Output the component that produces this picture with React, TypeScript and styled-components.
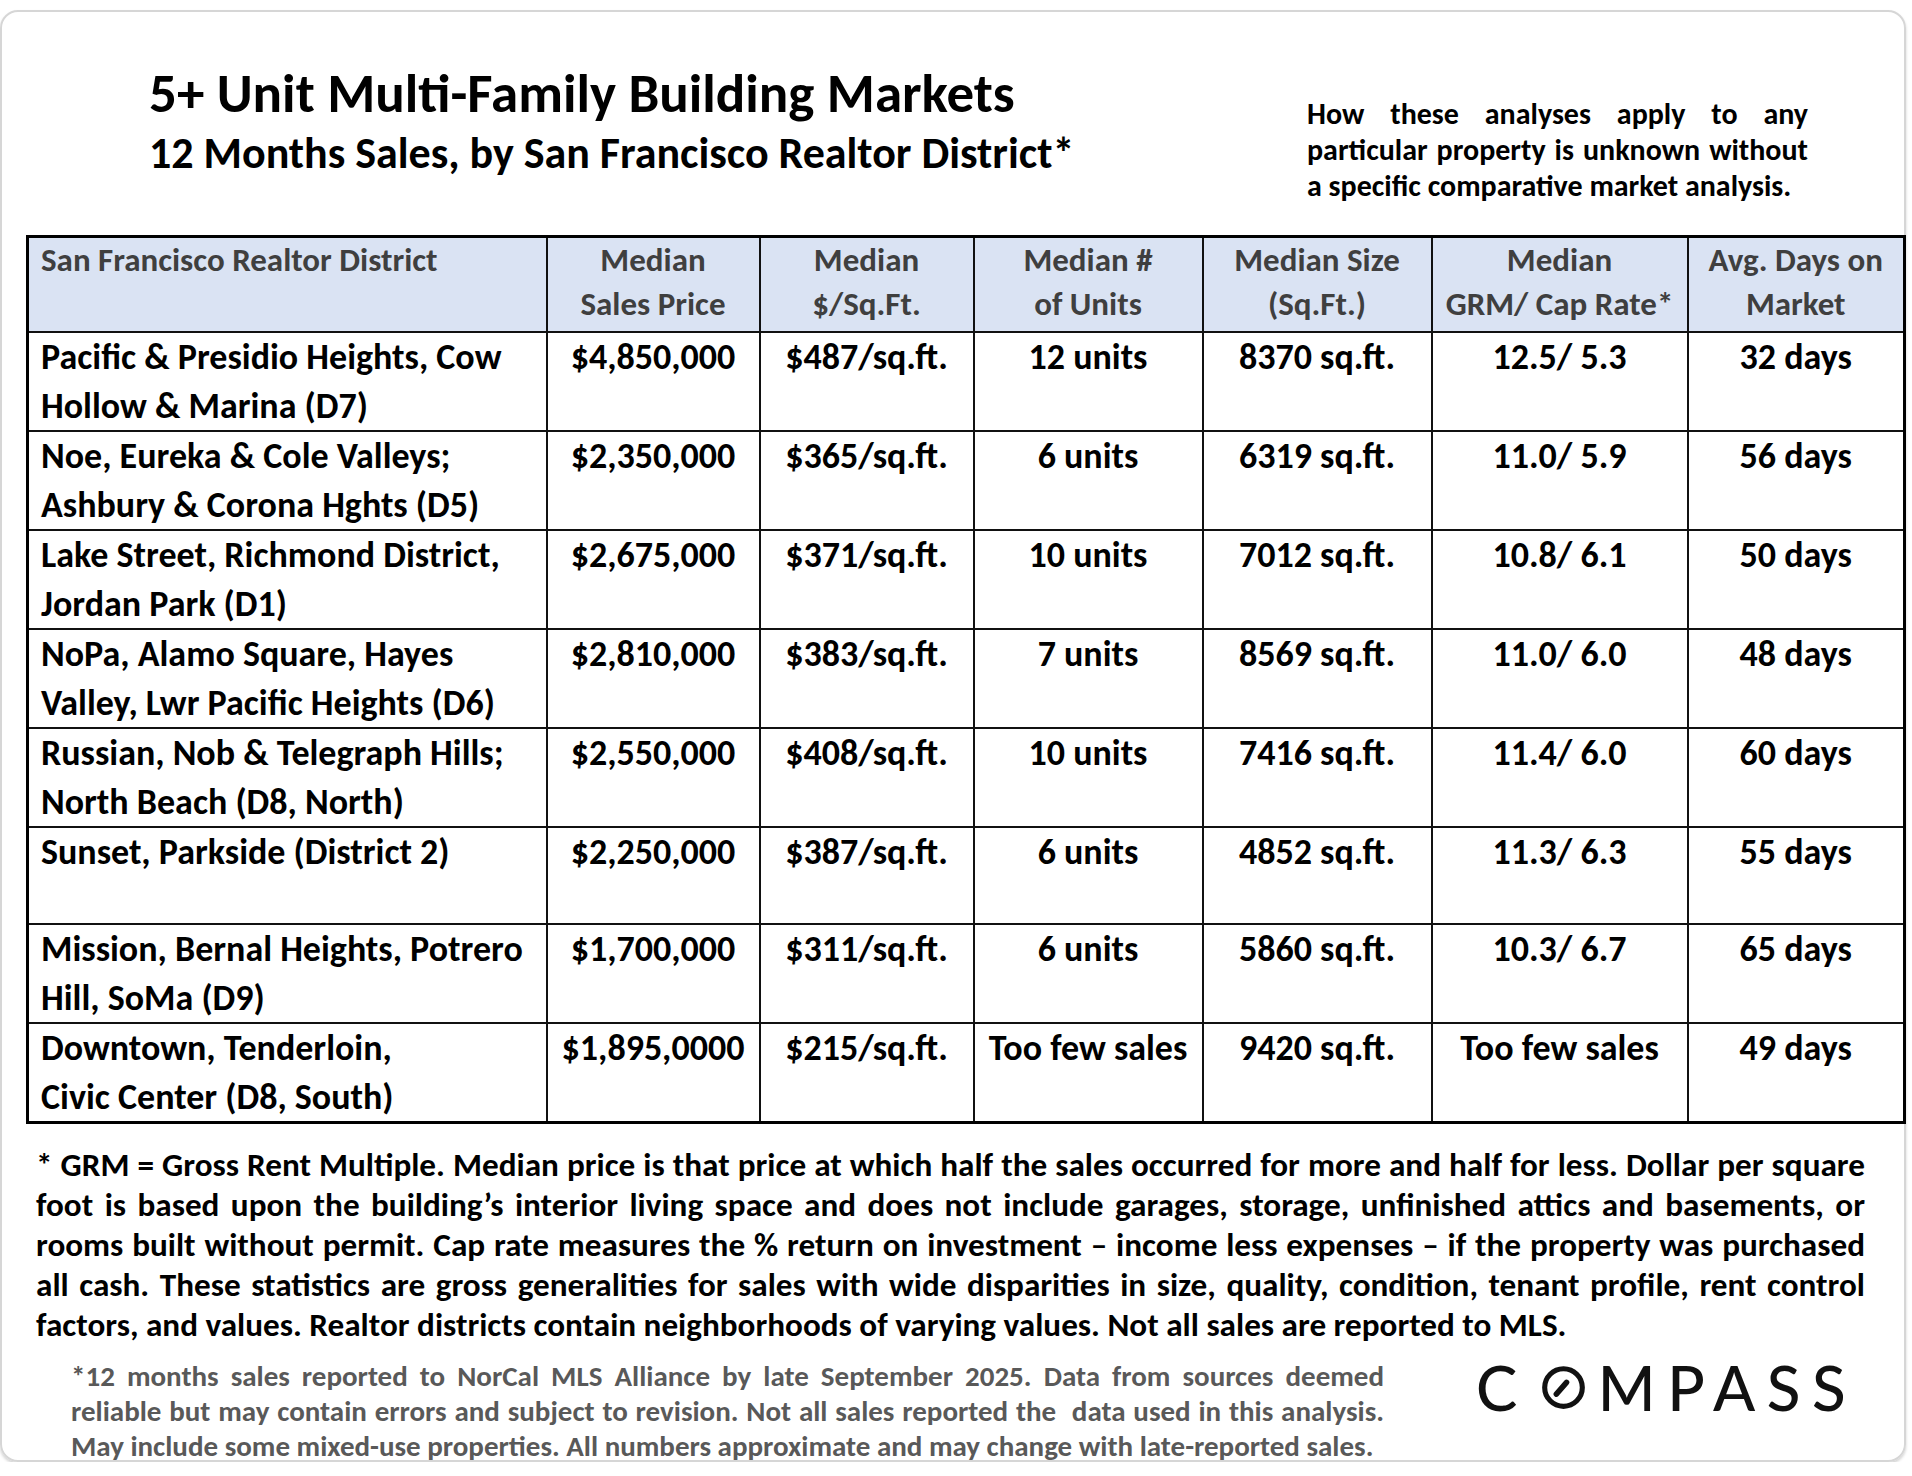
import React from 'react';
import styled, { createGlobalStyle } from 'styled-components';

const FONT = `"Carlito", "Lato", "Liberation Sans", sans-serif`;

const GlobalStyle = createGlobalStyle`
    body {
        margin: 0;
        background: #ffffff;
        font-family: ${FONT};
    }
`;

type Row = {
    district: string[];
    price: string;
    perSqft: string;
    units: string;
    size: string;
    grm: string;
    days: string;
};

const headers: string[][] = [
    ['San Francisco Realtor District'],
    ['Median', 'Sales Price'],
    ['Median', '$/Sq.Ft.'],
    ['Median #', 'of Units'],
    ['Median Size', '(Sq.Ft.)'],
    ['Median', 'GRM/ Cap Rate*'],
    ['Avg. Days on', 'Market'],
];

const colWidths = [519, 213, 214, 229, 229, 256, 217];

const rows: Row[] = [
    { district: ['Pacific & Presidio Heights, Cow', 'Hollow & Marina (D7)'], price: '$4,850,000', perSqft: '$487/sq.ft.', units: '12 units', size: '8370 sq.ft.', grm: '12.5/ 5.3', days: '32 days' },
    { district: ['Noe, Eureka & Cole Valleys;', 'Ashbury & Corona Hghts (D5)'], price: '$2,350,000', perSqft: '$365/sq.ft.', units: '6 units', size: '6319 sq.ft.', grm: '11.0/ 5.9', days: '56 days' },
    { district: ['Lake Street, Richmond District,', 'Jordan Park (D1)'], price: '$2,675,000', perSqft: '$371/sq.ft.', units: '10 units', size: '7012 sq.ft.', grm: '10.8/ 6.1', days: '50 days' },
    { district: ['NoPa, Alamo Square, Hayes', 'Valley, Lwr Pacific Heights (D6)'], price: '$2,810,000', perSqft: '$383/sq.ft.', units: '7 units', size: '8569 sq.ft.', grm: '11.0/ 6.0', days: '48 days' },
    { district: ['Russian, Nob & Telegraph Hills;', 'North Beach (D8, North)'], price: '$2,550,000', perSqft: '$408/sq.ft.', units: '10 units', size: '7416 sq.ft.', grm: '11.4/ 6.0', days: '60 days' },
    { district: ['Sunset, Parkside (District 2)'], price: '$2,250,000', perSqft: '$387/sq.ft.', units: '6 units', size: '4852 sq.ft.', grm: '11.3/ 6.3', days: '55 days' },
    { district: ['Mission, Bernal Heights, Potrero', 'Hill, SoMa (D9)'], price: '$1,700,000', perSqft: '$311/sq.ft.', units: '6 units', size: '5860 sq.ft.', grm: '10.3/ 6.7', days: '65 days' },
    { district: ['Downtown, Tenderloin,', 'Civic Center (D8, South)'], price: '$1,895,0000', perSqft: '$215/sq.ft.', units: 'Too few sales', size: '9420 sq.ft.', grm: 'Too few sales', days: '49 days' },
];

const disclaimerLines = [
    'How these analyses apply to any',
    'particular property is unknown without',
    'a specific comparative market analysis.',
];

const footnoteLines = [
    '* GRM = Gross Rent Multiple. Median price is that price at which half the sales occurred for more and half for less. Dollar per square',
    'foot is based upon the building’s interior living space and does not include garages, storage, unfinished attics and basements, or',
    'rooms built without permit. Cap rate measures the % return on investment – income less expenses – if the property was purchased',
    'all cash. These statistics are gross generalities for sales with wide disparities in size, quality, condition, tenant profile, rent control',
    'factors, and values. Realtor districts contain neighborhoods of varying values. Not all sales are reported to MLS.',
];

const sourceLines = [
    '*12 months sales reported to NorCal MLS Alliance by late September 2025. Data from sources deemed',
    'reliable but may contain errors and subject to revision. Not all sales reported the\u00a0 data used in this analysis.',
    'May include some mixed-use properties. All numbers approximate and may change with late-reported sales.',
];

function JustifiedLines({ lines }: { lines: string[] }) {
    return (
        <>
            {lines.map((l, i) => (
                <Line key={i} last={i === lines.length - 1}>
                    {l}
                </Line>
            ))}
        </>
    );
}

export default function App() {
    return (
        <>
            <GlobalStyle />
            <Card>
                <Head>
                    <TitleBlock>
                        <Title>5+ Unit Multi-Family Building Markets</Title>
                        <Subtitle>12 Months Sales, by San Francisco Realtor District*</Subtitle>
                    </TitleBlock>
                    <Disclaimer>
                        <JustifiedLines lines={disclaimerLines} />
                    </Disclaimer>
                </Head>

                <Table>
                    <colgroup>
                        {colWidths.map((w, i) => (
                            <col key={i} style={{ width: w }} />
                        ))}
                    </colgroup>
                    <thead>
                        <tr>
                            {headers.map((lines, i) => (
                                <HeadCell key={i} first={i === 0}>
                                    {lines.map((l) => (
                                        <div key={l}>{l}</div>
                                    ))}
                                </HeadCell>
                            ))}
                        </tr>
                    </thead>
                    <tbody>
                        {rows.map((r) => (
                            <BodyRow key={r.price + r.days}>
                                <Cell first>
                                    {r.district.map((l) => (
                                        <div key={l}>{l}</div>
                                    ))}
                                </Cell>
                                <Cell>{r.price}</Cell>
                                <Cell>{r.perSqft}</Cell>
                                <Cell>{r.units}</Cell>
                                <Cell>{r.size}</Cell>
                                <Cell>{r.grm}</Cell>
                                <Cell>{r.days}</Cell>
                            </BodyRow>
                        ))}
                    </tbody>
                </Table>

                <Footnote>
                    <JustifiedLines lines={footnoteLines} />
                </Footnote>

                <Bottom>
                    <SourceNote>
                        <JustifiedLines lines={sourceLines} />
                    </SourceNote>
                    <Logo>
                        <LogoLetter>C</LogoLetter>
                        <svg width="45" height="45" viewBox="0 0 44 44">
                            <circle cx="22" cy="22" r="18.4" fill="none" stroke="#111" strokeWidth="5" />
                            <line x1="15" y1="28.5" x2="25" y2="17" stroke="#111" strokeWidth="5.4" strokeLinecap="round" />
                        </svg>
                        <LogoLetter>MPASS</LogoLetter>
                    </Logo>
                </Bottom>
            </Card>
        </>
    );
}

// Styles ------------

const Card = styled.div`
    box-sizing: border-box;
    width: 1906px;
    height: 1452px;
    margin: 10px 0 0 0;
    border: 2px solid #d6d6d6;
    border-radius: 18px;
    box-shadow: 0 2px 3px rgba(0, 0, 0, 0.18);
    padding: 0 0 0 24px;
    display: flex;
    flex-direction: column;

    & > * {
        flex-shrink: 0;
    }
`;

const Head = styled.div`
    display: flex;
    justify-content: space-between;
    height: 223px;
    padding-right: 96px;
`;

const TitleBlock = styled.div`
    padding: 52px 0 0 123px;
`;

const Title = styled.h1`
    margin: 0;
    font-size: 55px;
    line-height: 60px;
    font-weight: 700;
    color: #000;
`;

const Subtitle = styled.h2`
    margin: 0;
    font-size: 44px;
    line-height: 58px;
    font-weight: 700;
    color: #000;
`;

const Line = styled.div<{ last?: boolean }>`
    white-space: nowrap;
    text-align: ${(p) => (p.last ? 'left' : 'justify')};
    text-align-last: ${(p) => (p.last ? 'left' : 'justify')};
`;

const Disclaimer = styled.div`
    width: 501px;
    padding-top: 84px;
    font-size: 30px;
    line-height: 36px;
    font-weight: 700;
    color: #000;
`;

const Table = styled.table`
    width: 1877px;
    table-layout: fixed;
    border-collapse: collapse;
    border: 3px solid #000;
`;

const HeadCell = styled.th<{ first?: boolean }>`
    height: 93px;
    padding: 0 ${(p) => (p.first ? '12px' : '2px')};
    vertical-align: top;
    text-align: ${(p) => (p.first ? 'left' : 'center')};
    background: #dae3f3;
    border: 2px solid #111;
    color: #3f3f3f;
    font-size: 33px;
    line-height: 44px;
    font-weight: 700;
    white-space: nowrap;
`;

const BodyRow = styled.tr`
    height: 97px;
`;

const Cell = styled.td<{ first?: boolean }>`
    padding: 0 ${(p) => (p.first ? '12px' : '2px')};
    vertical-align: top;
    text-align: ${(p) => (p.first ? 'left' : 'center')};
    border: 2px solid #111;
    color: #000;
    font-size: 36px;
    line-height: 48.5px;
    font-weight: 700;
    white-space: nowrap;
`;

const Footnote = styled.div`
    width: 1829px;
    margin: 21px 0 0 10px;
    font-size: 33.2px;
    line-height: 40px;
    font-weight: 700;
    color: #000;
`;

const Bottom = styled.div`
    display: flex;
    align-items: flex-start;
    margin-top: 14px;
`;

const SourceNote = styled.div`
    width: 1313px;
    margin-left: 45px;
    font-size: 29px;
    line-height: 35px;
    font-weight: 700;
    color: #595959;
`;

const Logo = styled.div`
    display: flex;
    align-items: center;
    gap: 12px;
    margin: 4px 0 0 92px;
`;

const LogoLetter = styled.span`
    font-family: "Lato", "DejaVu Sans", sans-serif;
    font-size: 62px;
    line-height: 48px;
    font-weight: 500;
    letter-spacing: 11.5px;
    color: #111;
`;
